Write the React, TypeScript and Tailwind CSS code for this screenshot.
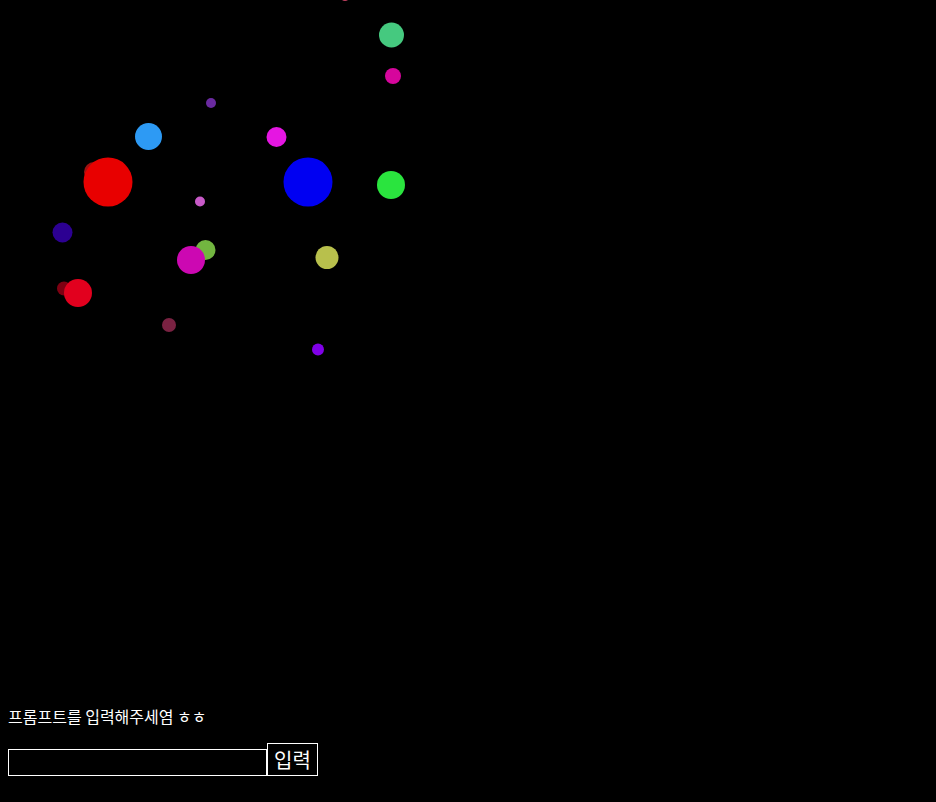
import React from 'react'

// circles floating around the canvas: [cx, cy, r, color]
const BUBBLES: Array<[number, number, number, string]> = [
  [345, -4, 5, '#c04060'],
  [391.5, 35, 12.5, '#45c97f'],
  [393, 76, 8, '#d6069c'],
  [211, 103, 5, '#6a2aa0'],
  [148.5, 136.5, 13.5, '#2d9af4'],
  [276.5, 137, 10, '#e516e2'],
  [94, 172, 10, '#a01010'],
  [108, 182, 24.5, '#e80000'],
  [308, 182, 24.5, '#0000f2'],
  [391, 185, 14, '#2ae43e'],
  [200, 201.5, 5, '#c85ac8'],
  [62.5, 232.5, 10, '#2c0092'],
  [205.5, 250, 10, '#72b640'],
  [191, 260, 14, '#cc08b2'],
  [327, 257.5, 11.5, '#b8c04c'],
  [64, 288.5, 7, '#7e0012'],
  [78, 293, 14, '#e2001e'],
  [169, 325, 7, '#7a2242'],
  [318, 349.5, 6, '#8000e8'],
]

export default function App() {
  return (
    <div className="h-screen bg-black flex flex-col overflow-hidden font-['Noto_Sans_CJK_KR','Noto_Sans',sans-serif]">
      {/* Canvas */}
      <svg className="flex-1 w-full" viewBox="0 0 936 705" preserveAspectRatio="xMinYMin slice">
        {BUBBLES.map(([cx, cy, r, c], i) => (
          <circle key={i} cx={cx} cy={cy} r={r} fill={c} />
        ))}
      </svg>

      {/* Prompt */}
      <div className="px-2 pb-[26px]">
        <p className="text-white text-base leading-6 mb-[15px]">프롬프트를 입력해주세염 ㅎㅎ</p>
        <div className="flex items-end">
          <input className="w-[259px] h-[27px] border border-white bg-black text-white outline-none" />
          <button className="h-[33px] px-[6px] border border-white text-white text-[20px] leading-none">
            입력
          </button>
        </div>
      </div>
    </div>
  )
}
